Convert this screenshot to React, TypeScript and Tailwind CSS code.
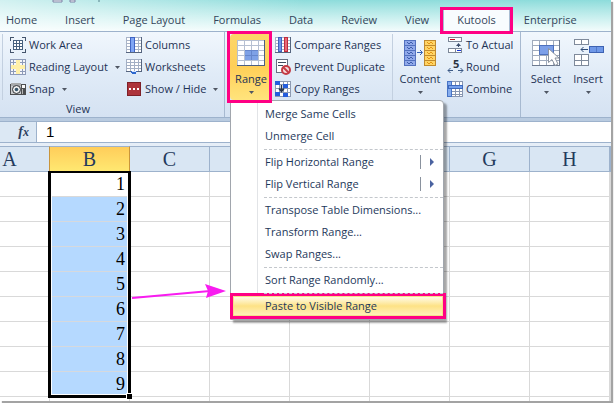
import React from "react";

const tabs = ["Home", "Insert", "Page Layout", "Formulas", "Data", "Review", "View", "Kutools", "Enterprise"];
const columns = ["A", "B", "C", "D", "E", "F", "G", "H", ""];
const rows = [1, 2, 3, 4, 5, 6, 7, 8, 9];

const menuGroups = [
  [{ label: "Merge Same Cells" }, { label: "Unmerge Cell" }],
  [
    { label: "Flip Horizontal Range", sub: true },
    { label: "Flip Vertical Range", sub: true },
  ],
  [{ label: "Transpose Table Dimensions..." }, { label: "Transform Range..." }, { label: "Swap Ranges..." }],
  [{ label: "Sort Range Randomly..." }],
];

type IconProps = { children: React.ReactNode };

function SmallIcon({ children }: IconProps) {
  return (
    <svg className="w-4 h-4 shrink-0 overflow-visible" viewBox="0 0 16 16" fill="none" shapeRendering="crispEdges" aria-hidden="true">
      {children}
    </svg>
  );
}

function LargeIcon({ children }: IconProps) {
  return (
    <svg className="w-8 h-7 shrink-0" viewBox="0 0 32 28" fill="none" shapeRendering="crispEdges" aria-hidden="true">
      {children}
    </svg>
  );
}

function Caret() {
  return (
    <svg className="w-[5px] h-[3px] shrink-0" viewBox="0 0 5 3" aria-hidden="true">
      <path d="M0 0h5L2.5 3z" fill="#4f5663" />
    </svg>
  );
}

const WorkAreaIcon = () => (
  <SmallIcon>
    <path d="M4 .5H.5V4M12 .5h3.500V4M.5 12v3.500H4M15.500 12v3.500H12" stroke="#44546c" />
    <path d="M3 3h10v10H3z" fill="#fff" />
    <path d="M3.500 3.500h9v9h-9zM3 6.500h10M3 9.500h10M6.500 3v10M9.500 3v10" stroke="#47617f" />
  </SmallIcon>
);

const ReadingIcon = () => (
  <SmallIcon>
    <path d="M0 0h16v16H0z" fill="#f5f7fb" />
    <path d="M.5.5h15v15H.5zM0 3.500h16M0 12.500h16M3.500 0v16M12.500 0v16M0 8.500h16" stroke="#8d9bb8" />
    <path d="M6 1h4v5h5v4h-5v5H6v-5H1V6h5z" fill="#fff0a8" />
  </SmallIcon>
);

const SnapIcon = () => (
  <SmallIcon>
    <path d="M0 3h16v11H0z" fill="#4c4e50" />
    <path d="M1 2h10v3H1z" fill="#a8abad" />
    <path d="M1 5h10v8H1z" fill="#c8cbce" />
    <circle cx="6.500" cy="8.500" r="4" fill="#eceeef" stroke="#323438" shapeRendering="auto" />
    <circle cx="6.500" cy="8.500" r="1.800" fill="#37566b" shapeRendering="auto" />
    <path d="M12 4h3v3h-3z" fill="#f8f8f8" />
    <path d="M12 8h1v5h-1z" fill="#b5b5b5" />
  </SmallIcon>
);

const ColumnsIcon = () => (
  <SmallIcon>
    <path d="M0 0h16v16H0z" fill="#fff" />
    <path d="M0 3.500h16M0 6.500h16M0 9.500h16M0 12.500h16M12.500 0v16M.5 0v16M0 .5h16" stroke="#a9b4c8" />
    <path d="M15.500 0v16M0 15.500h16" stroke="#56657f" />
    <path d="M4 0h5v15H4z" fill="#3f64c4" />
    <path d="M5 1h3v14H5z" fill="#7fa5f4" />
  </SmallIcon>
);

const WorksheetsIcon = () => (
  <SmallIcon>
    <path d="M0 0h16v13H0z" fill="#fff" />
    <path d="M0 .5h16M.5 0v13M0 3.500h16M0 6.500h16M0 9.500h16M4.500 0v13M8.500 0v13M12.500 0v13" stroke="#a3afc4" />
    <path d="M15.500 0v13M0 12.500h16" stroke="#56657f" />
    <path d="M5 12h6l-1 3H6z" fill="#2d68cf" />
    <path d="M6 12h4v1H6z" fill="#cfe1ff" />
  </SmallIcon>
);

const ShowHideIcon = () => (
  <SmallIcon>
    <path d="M1.500 1.500h13v13h-13z" fill="#ad343b" stroke="#7e2028" />
    <path d="M3 7h2v2H3zM7 7h2v2H7zM11 7h2v2h-2z" fill="#fff" />
  </SmallIcon>
);

const CompareIcon = () => (
  <SmallIcon>
    <path d="M0 0h16v16H0z" fill="#fff" />
    <path d="M0 .5h16M.5 0v16M0 3.500h16M0 6.500h16M0 9.500h16M0 12.500h16" stroke="#a9b4c8" />
    <path d="M15.500 0v16M0 15.500h16" stroke="#56657f" />
    <path d="M3 0h4v15H3z" fill="#3f62bd" />
    <path d="M4 1h2v13H4z" fill="#6f95e8" />
    <path d="M9 0h4v15H9z" fill="#c22a3b" />
    <path d="M10 1h2v13h-2z" fill="#e46a78" />
  </SmallIcon>
);

const PreventIcon = () => (
  <SmallIcon>
    <path d="M1.500.5h11v13h-11z" fill="#fff" stroke="#666f82" />
    <path d="M3 3.500h8M3 6.500h5" stroke="#3f4a5e" />
    <circle cx="11" cy="11" r="4" fill="#f5dcdc" stroke="#c43b45" strokeWidth="2" shapeRendering="auto" />
    <path d="M8 8l6 6" stroke="#c43b45" strokeWidth="2" shapeRendering="auto" />
  </SmallIcon>
);

const CopyIcon = () => (
  <SmallIcon>
    <path d="M0 0h16v16H0z" fill="#fff" />
    <path d="M.5.5h15v15H.5zM0 3.500h16M0 7.500h16M0 11.500h16M4.500 0v16M8.500 0v16M12.500 0v16" stroke="#8d9ab2" />
    <path d="M0 0h5v4H0zM8 3h5v4H8zM0 11h5v4H0zM8 12h5v4H8z" fill="#245ddc" />
    <path d="M6.500 4v6M4 7.500l2.500 3L9 7.500" stroke="#24334d" strokeWidth="1.500" shapeRendering="auto" />
  </SmallIcon>
);

const ToActualIcon = () => (
  <SmallIcon>
    <path d="M1.500.5h13v4h-13zM1.500 11.500h13v4h-13z" fill="#fff" stroke="#7c8798" />
    <path d="M8.500 11v5" stroke="#7c8798" />
    <path d="M3 2h5v1H3z" fill="#c1121d" />
    <path d="M10 13h4v1h-4z" fill="#1434d8" />
    <path d="M11.500 7v3" stroke="#3a4c6b" />
    <path d="M9 9l2.500-3L14 9z" fill="#3a4c6b" shapeRendering="auto" />
  </SmallIcon>
);

const RoundIcon = () => (
  <SmallIcon>
    <text x="6" y="9" fontSize="11" fontWeight="700" fontFamily="Open Sans, sans-serif" fill="#2c3442">5</text>
    <path d="M1 11.500h5M11 11.500h5" stroke="#3c5a86" />
    <path d="M3.500 9L1 11.500 3.500 14M13.500 9l2.500 2.500-2.500 2.500" stroke="#3c5a86" shapeRendering="auto" />
  </SmallIcon>
);

const CombineIcon = () => (
  <SmallIcon>
    <path d="M0 0h16v16H0z" fill="#fff" />
    <path d="M.5.5h15v15H.5zM0 10.500h16M0 13.500h16M8.500 0v16M12.500 0v16" stroke="#8796b1" />
    <path d="M0 0h5v16H0z" fill="#4774c6" />
    <path d="M1 1h3v14H1z" fill="#86adee" />
    <path d="M1 4h15v4H1z" fill="#3d69bd" />
    <path d="M2 5h13v2H2z" fill="#75a0ec" />
  </SmallIcon>
);

const RangeIcon = () => (
  <LargeIcon>
    <path d="M2 1h28v26H2z" fill="#fff" />
    <path d="M9 11h14v10H9z" fill="#7ea1e6" />
    <path d="M2.500 1v26M9.500 1v26M16.500 1v26M23.500 1v26M2 1.500h28M2 6.500h28M2 11.500h28M2 16.500h28M2 21.500h28" stroke="#b6c0d2" />
    <path d="M10 11.500h13M10 16.500h13M16.500 12v9" stroke="#6586cc" />
    <path d="M29.500 1v26M2 26.500h28" stroke="#4c5f81" />
  </LargeIcon>
);

const ContentIcon = () => (
  <LargeIcon>
    <path d="M0 1h12v26H0z" fill="#5371bf" />
    <path d="M1 2h10v4H1zM1 7h10v4H1zM1 12h10v4H1zM1 17h10v4H1zM1 22h10v4H1z" fill="#90a9ea" />
    <path d="M20 1h12v26H20z" fill="#c08a2e" />
    <path d="M21 2h10v4H21zM21 7h10v4H21zM21 12h10v4H21zM21 17h10v4H21zM21 22h10v4H21z" fill="#ffd466" />
    <g shapeRendering="auto">
      <path d="M3 3l2 2 2-2 2 2M3 8l2 2 2-2 2 2M3 13l2 2 2-2 2 2M3 18l2 2 2-2 2 2M3 23l2 2 2-2 2 2" stroke="#3d5cab" />
      <path d="M23 3l2 2 2-2 2 2M23 8l2 2 2-2 2 2M23 13l2 2 2-2 2 2M23 18l2 2 2-2 2 2M23 23l2 2 2-2 2 2" stroke="#e39412" />
      <path d="M13 13.500h5M16 11l2.500 2.500L16 16" stroke="#3560b5" />
    </g>
  </LargeIcon>
);

const SelectIcon = () => (
  <LargeIcon>
    <path d="M2 1h28v26H2z" fill="#fff" />
    <path d="M2.500 1v26M9.500 1v26M16.500 1v26M23.500 1v26M2 1.500h28M2 6.500h28M2 11.500h28M2 16.500h28M2 21.500h28" stroke="#a0abbd" />
    <path d="M29.500 1v26M2 26.500h28" stroke="#6d7a90" />
    <path d="M9 6h15v10H9z" fill="#7c9fe8" />
    <path d="M9.500 6.500h14v9h-14z" stroke="#4d70bd" />
    <path d="M18.500 9.500v14l3.500-3 3 6 3-1.500-3-6h4z" fill="#fff" stroke="#8b939f" shapeRendering="auto" />
  </LargeIcon>
);

const InsertIcon = () => (
  <LargeIcon>
    <path d="M2.500.5h14v5h-14zM2.500 15.500h14v11h-14z" fill="#fff" stroke="#7f8a9b" />
    <path d="M9.500 0v6M9.500 15v12M2 21.500h15" stroke="#7f8a9b" />
    <path d="M17.500 7.500h14v6h-14z" fill="#6f98e8" stroke="#3d62b2" />
    <path d="M24.500 8v5" stroke="#5279c8" />
    <path d="M9 10.500h7M11.500 8L9 10.500l2.500 2.500" stroke="#2f4c79" shapeRendering="auto" />
  </LargeIcon>
);

function SmallButton({ icon, label, caret }: { icon: React.ReactNode; label: string; caret?: boolean }) {
  return (
    <button type="button" className="flex h-[22px] items-center gap-[3px] whitespace-nowrap text-left">
      {icon}
      <span>{label}</span>
      {caret && (
        <span className="ml-1">
          <Caret />
        </span>
      )}
    </button>
  );
}

function LargeButton({ icon, label }: { icon: React.ReactNode; label: string }) {
  return (
    <button type="button" className="flex w-[42px] shrink-0 flex-col items-center pt-[5px]">
      {icon}
      <span className="mt-1 leading-4">{label}</span>
      <span className="mt-1">
        <Caret />
      </span>
    </button>
  );
}

function RangeMenu() {
  return (
    <div
      role="menu"
      className="absolute left-0 top-full z-20 w-[214px] rounded-tr-sm border border-[#a1a6ad] bg-white pt-[2px] text-[#1e395b] shadow-[3px_3px_2px_rgba(0,0,0,0.35)]"
    >
      <div className="bg-[linear-gradient(to_right,transparent_26px,#e2e4e7_26px,#e2e4e7_27px,transparent_27px)]">
        {menuGroups.map((group, i) => (
          <div key={i}>
            {group.map((item) => (
              <button
                key={item.label}
                type="button"
                role="menuitem"
                className="flex h-[22px] w-full items-center whitespace-nowrap pl-[34px] pr-[9px] text-left"
              >
                <span className="flex-1">{item.label}</span>
                {"sub" in item && (
                  <span className="flex h-[14px] items-center border-l border-[#8a929e] pl-[9px]">
                    <svg className="h-[8px] w-[4px]" viewBox="0 0 4 8" aria-hidden="true">
                      <path d="M0 0l4 4-4 4z" fill="#4a62a0" />
                    </svg>
                  </span>
                )}
              </button>
            ))}
            <div className="ml-[33px] flex h-1 items-center">
              <div className="w-full border-t border-dashed border-[#c3c7cc]" />
            </div>
          </div>
        ))}
      </div>
      <div className="-ml-px -mr-[3px] -mt-[2px] border-[3px] border-[#ff0084]">
        <button
          type="button"
          role="menuitem"
          className="flex h-5 w-full items-center border border-[#f6df8b] bg-linear-to-b from-[#fffbe6] via-[#fde285] to-[#fff0b8] pl-[31px] text-left"
        >
          Paste to Visible Range
        </button>
      </div>
    </div>
  );
}

function TabBar() {
  return (
    <nav className="relative flex h-[31px] items-end bg-linear-to-b from-[#8ddcdb] via-[#c3eeed] to-[#f3fcfc]">
      <div className="absolute inset-y-0 left-0 w-1/2 bg-linear-to-r from-white/60 to-transparent" />
      <svg className="absolute left-[52px] top-0 h-[3px] w-[50px]" viewBox="0 0 50 3" aria-hidden="true">
        <path d="M1 0h9v2H1zM18 0h5v2h-5z" fill="#f6f8fb" stroke="#7d83a6" />
        <path d="M47 0v2" stroke="#56828c" />
      </svg>
      <ul className="relative -ml-2 flex items-end text-[#33455a]">
        {tabs.map((tab) => (
          <li key={tab} className="relative">
            <button
              type="button"
              className={
                tab === "Kutools"
                  ? "h-[23px] whitespace-nowrap border-x border-[#a9bdd2] bg-[#f8fcfe] px-[13px] pt-px"
                  : "h-[23px] whitespace-nowrap px-[14px] pt-px"
              }
            >
              {tab}
            </button>
            {tab === "Kutools" && (
              <span className="pointer-events-none absolute -inset-x-[3px] -bottom-[3px] -top-px z-10 border-[3px] border-[#ff0084]" />
            )}
          </li>
        ))}
      </ul>
    </nav>
  );
}

function Ribbon() {
  return (
    <section className="flex h-[87px] border-y border-[#9db2cc] bg-linear-to-b from-[#f1f7fd] via-[#e0ebf7] to-[#d5e2f2] text-[#1e3355]">
      <div className="flex w-[225px] shrink-0 flex-col border-r border-[#a7b9d0] pt-[2px]">
        <div className="ml-[2px] flex border-l border-[#c3d0e0]">
          <div className="w-[116px] pl-[7px]">
            <SmallButton icon={<WorkAreaIcon />} label="Work Area" />
            <SmallButton icon={<ReadingIcon />} label="Reading Layout" caret />
            <SmallButton icon={<SnapIcon />} label="Snap" caret />
          </div>
          <div className="pl-[7px]">
            <SmallButton icon={<ColumnsIcon />} label="Columns" />
            <SmallButton icon={<WorksheetsIcon />} label="Worksheets" />
            <SmallButton icon={<ShowHideIcon />} label="Show / Hide" caret />
          </div>
        </div>
        <div className="flex-1 pr-[68px] pt-px text-center leading-4">View</div>
      </div>
      <div className="flex w-[296px] shrink-0 border-r border-[#a7b9d0] pl-[5px] pt-[2px]">
        <div className="relative h-[66px]">
          <div className="h-full rounded-sm bg-linear-to-b from-[#fcd66a] via-[#ffcf57] to-[#ffe47c]">
            <LargeButton icon={<RangeIcon />} label="Range" />
          </div>
          <span className="pointer-events-none absolute -bottom-[3px] -left-[3px] right-0 -top-[3px] z-30 border-[3px] border-[#ff0084]" />
          <RangeMenu />
        </div>
        <div className="flex h-[66px] w-[121px] shrink-0 flex-col border-r border-[#c3d0e0] pl-[3px]">
          <SmallButton icon={<CompareIcon />} label="Compare Ranges" />
          <SmallButton icon={<PreventIcon />} label="Prevent Duplicate" />
          <SmallButton icon={<CopyIcon />} label="Copy Ranges" />
        </div>
        <div className="flex pl-[6px]">
          <LargeButton icon={<ContentIcon />} label="Content" />
          <div className="pl-[6px]">
            <SmallButton icon={<ToActualIcon />} label="To Actual" />
            <SmallButton icon={<RoundIcon />} label="Round" />
            <SmallButton icon={<CombineIcon />} label="Combine" />
          </div>
        </div>
      </div>
      <div className="flex pl-1 pt-[2px]">
        <LargeButton icon={<SelectIcon />} label="Select" />
        <LargeButton icon={<InsertIcon />} label="Insert" />
      </div>
    </section>
  );
}

function FormulaBar() {
  return (
    <div className="flex h-[22px] border-y border-[#9db2cc] bg-white">
      <label
        htmlFor="formula"
        className="w-[37px] shrink-0 border-r border-[#9db2cc] bg-[#dce8f4] pr-[7px] text-right font-['Liberation_Serif',serif] text-sm leading-[19px] font-bold text-[#2c3f5e] italic"
      >
        f<span className="text-xs">x</span>
      </label>
      <input
        id="formula"
        defaultValue="1"
        className="min-w-0 flex-1 px-[9px] font-['Liberation_Sans',sans-serif] text-[15px] text-black outline-none"
      />
    </div>
  );
}

function Sheet() {
  return (
    <div className="relative font-['Liberation_Serif',serif] text-lg">
      <table className="w-full table-fixed border-separate border-spacing-0">
        <colgroup>
          {columns.map((c, i) => (
            <col key={i} className={i === 0 ? "w-[50px]" : c ? "w-20" : ""} />
          ))}
        </colgroup>
        <thead>
          <tr className="h-[26px]">
            {columns.map((c, i) => (
              <th
                key={i}
                className={
                  c === "B"
                    ? "border-y border-r border-y-[#9db2cc] border-r-[#c9953a] bg-linear-to-b from-[#ffcd5a] to-[#ffe871] p-0 text-xl leading-6 font-normal text-[#243a5c]"
                    : c === "A"
                      ? "border-y border-r border-y-[#9db2cc] border-r-[#c9953a] bg-[#d9e6f3] p-0 pr-[30px] text-xl leading-6 font-normal text-[#243a5c]"
                      : "border-y border-r border-[#9db2cc] bg-[#d9e6f3] p-0 text-xl leading-6 font-normal text-[#243a5c]"
                }
              >
                {c}
              </th>
            ))}
          </tr>
        </thead>
        <tbody>
          {rows.map((n) => (
            <tr key={n} className="h-[25px]">
              {columns.map((c, i) => (
                <td
                  key={i}
                  className={
                    c === "B" && n > 1
                      ? "border-r border-b border-[#d6d9dd] bg-[#b5d9ff] p-0 pr-1 text-right leading-6 text-black"
                      : "border-r border-b border-[#d9d9d9] p-0 pr-1 text-right leading-6 text-black"
                  }
                >
                  {c === "B" ? n : ""}
                </td>
              ))}
            </tr>
          ))}
          <tr className="h-1">
            {columns.map((_, i) => (
              <td key={i} className="border-r border-[#d9d9d9] p-0" />
            ))}
          </tr>
        </tbody>
      </table>
      <div className="pointer-events-none absolute bottom-[3px] left-12 top-[25px] w-[83px] border-[3px] border-t-2 border-black">
        <div className="h-full border border-t-0 border-white" />
        <span className="absolute -right-[4px] -bottom-[4px] h-[6px] w-[6px] border-t border-l border-white bg-black" />
      </div>
      <svg className="pointer-events-none absolute left-[132px] top-[137px] h-4 w-[95px]" viewBox="0 0 95 16" aria-hidden="true">
        <path d="M0 15L78 8" stroke="#f81cf0" strokeWidth="2" />
        <path d="M73 1l21 7-20 7 2-7z" fill="#f81cf0" />
      </svg>
    </div>
  );
}

export default function App() {
  return (
    <div className="overflow-hidden bg-white pr-[3px] pb-[2px] font-['Open_Sans',sans-serif] text-[11px] leading-4">
      <main className="bg-white shadow-[2px_2px_1px_#a3a3a3]">
        <TabBar />
        <Ribbon />
        <div className="h-[3px] bg-[#b9cbe0]" />
        <FormulaBar />
        <div className="h-[3px] bg-[#e6eef7]" />
        <Sheet />
      </main>
    </div>
  );
}
